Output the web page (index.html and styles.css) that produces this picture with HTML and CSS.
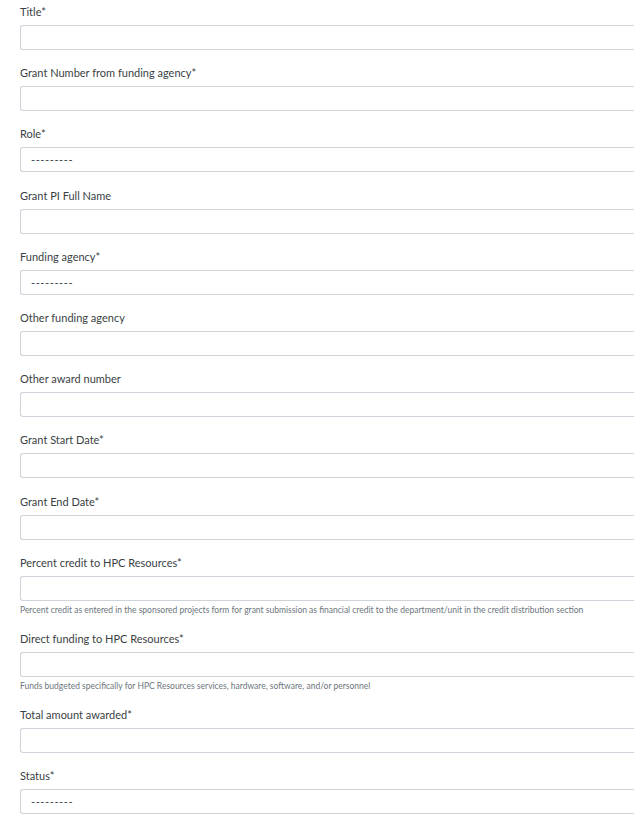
FILE: index.html
```html
<!DOCTYPE html>
<html lang="en">
<head>
  <meta charset="UTF-8" />
  <title>Grant</title>
  <link rel="stylesheet" href="styles.css">
</head>
<body>
  <form class="grant-form">
    <div class="form-group">
      <label for="title">Title*</label>
      <input type="text" id="title">
    </div>
    <div class="form-group">
      <label for="grant_number">Grant Number from funding agency*</label>
      <input type="text" id="grant_number">
    </div>
    <div class="form-group">
      <label for="role">Role*</label>
      <select id="role"><option>---------</option></select>
    </div>
    <div class="form-group">
      <label for="pi_name">Grant PI Full Name</label>
      <input type="text" id="pi_name">
    </div>
    <div class="form-group">
      <label for="agency">Funding agency*</label>
      <select id="agency"><option>---------</option></select>
    </div>
    <div class="form-group">
      <label for="other_agency">Other funding agency</label>
      <input type="text" id="other_agency">
    </div>
    <div class="form-group">
      <label for="other_award">Other award number</label>
      <input type="text" id="other_award">
    </div>
    <div class="form-group">
      <label for="start_date">Grant Start Date*</label>
      <input type="text" id="start_date">
    </div>
    <div class="form-group">
      <label for="end_date">Grant End Date*</label>
      <input type="text" id="end_date">
    </div>
    <div class="form-group">
      <label for="percent_credit">Percent credit to HPC Resources*</label>
      <input type="text" id="percent_credit">
      <small class="help">Percent credit as entered in the sponsored projects form for grant submission as financial credit to the department/unit in the credit distribution section</small>
    </div>
    <div class="form-group">
      <label for="direct_funding">Direct funding to HPC Resources*</label>
      <input type="text" id="direct_funding">
      <small class="help">Funds budgeted specifically for HPC Resources services, hardware, software, and/or personnel</small>
    </div>
    <div class="form-group">
      <label for="total_amount">Total amount awarded*</label>
      <input type="text" id="total_amount">
    </div>
    <div class="form-group">
      <label for="status">Status*</label>
      <select id="status"><option>---------</option></select>
    </div>
  </form>
</body>
</html>
```

FILE: styles.css
```css
* {
  box-sizing: border-box;
}

body {
  margin: 0;
  padding: 0.5px 0 0 20px;
  font-family: "Lato", "Liberation Sans", sans-serif;
  font-size: 11px;
  color: #3a3f44;
  background: #fff;
  overflow: hidden;
}

.form-group {
  margin-bottom: 11.7px;
}

label {
  display: block;
  line-height: 16.5px;
  padding-top: 3.5px;
  margin-bottom: 4.5px;
}

/* fields run past the right edge of the window */
input, select {
  display: block;
  width: 100%;
  height: 25px;
  padding: 0 10px;
  font-family: inherit;
  font-size: 11px;
  color: #3a3f44;
  background: #fff;
  border: 1px solid #ced4da;
  border-right: 0;
  border-radius: 3px 0 0 3px;
  appearance: none;
}

select {
  letter-spacing: 0.6px;
}

.help {
  display: block;
  margin-top: 3px;
  font-size: 8.5px;
  line-height: 12px;
  color: #6c757d;
}
```
